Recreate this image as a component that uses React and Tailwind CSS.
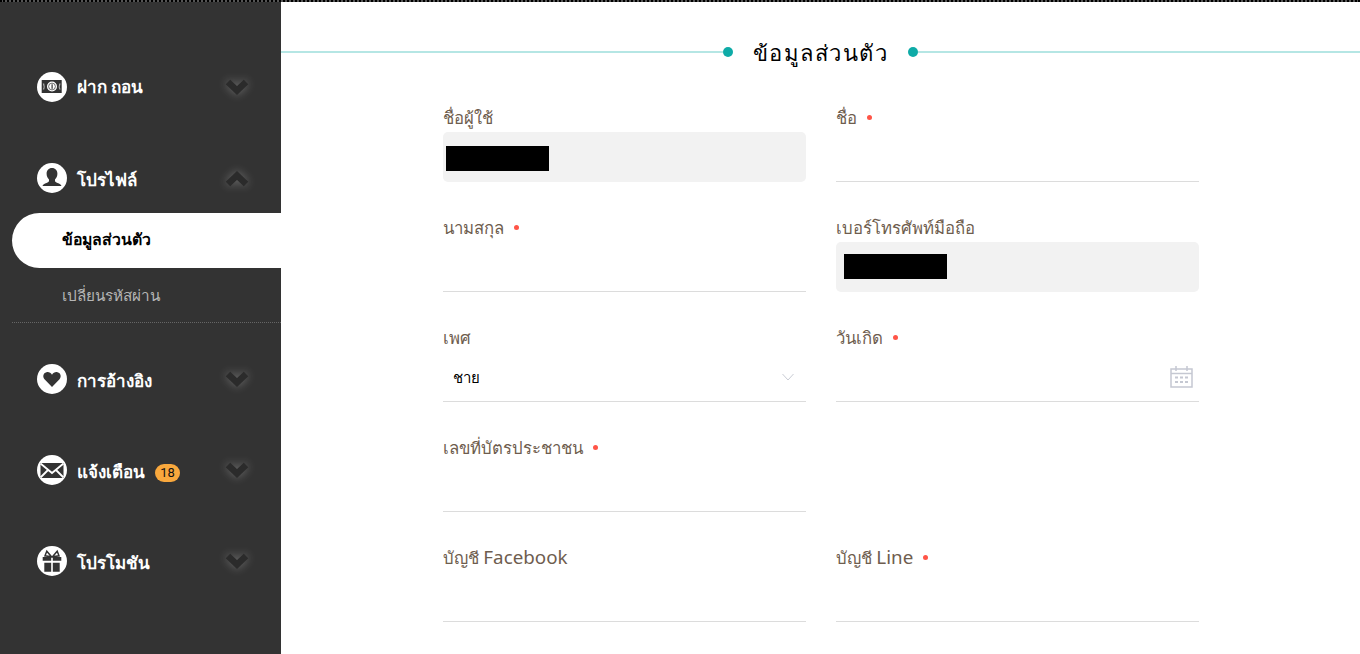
import React from 'react';

const MoneyIcon = () => (
  <svg viewBox="0 0 30 30" className="w-[30px] h-[30px]">
    <circle cx="15" cy="15" r="15" fill="#fff" />
    <rect x="4.700" y="8" width="20" height="13" fill="#333" />
    <circle cx="15" cy="14.500" r="5" fill="#fff" />
    <circle cx="15" cy="14.500" r="3.400" fill="none" stroke="#333" strokeWidth=".7" />
    <rect x="14.500" y="12.300" width="1.200" height="4.500" fill="#333" />
    <path d="M5.800 11.500q1.500 3 0 6h1.400q1-3 0-6zM23.600 11.500q-1.500 3 0 6h-1.400q-1-3 0-6z" fill="#aaa" />
  </svg>
);

const UserIcon = () => (
  <svg viewBox="0 0 30 30" className="w-[30px] h-[30px]">
    <circle cx="15" cy="15" r="15" fill="#fff" />
    <path d="M15 5c3.400 0 5.400 2.500 5.400 5.800 0 2.400-1 4.500-2.400 5.600v1.700c0 .8 1 1.200 2.500 1.800 2 .8 3.600 1.500 4 3.100H5.500c.4-1.600 2-2.300 4-3.100 1.500-.6 2.500-1 2.500-1.800v-1.700c-1.400-1.100-2.400-3.200-2.400-5.600C9.600 7.500 11.600 5 15 5z" fill="#333" />
  </svg>
);

const HeartIcon = () => (
  <svg viewBox="0 0 30 30" className="w-[30px] h-[30px]">
    <circle cx="15" cy="15" r="15" fill="#fff" />
    <path d="M15 23L7.500 15.200C5.500 13 6 9 9.500 8.200c2.300-.5 4.300.6 5.500 2.600 1.200-2 3.200-3.100 5.500-2.600C24 9 24.500 13 22.500 15.200z" fill="#333" />
  </svg>
);

const MailIcon = () => (
  <svg viewBox="0 0 30 30" className="w-[30px] h-[30px]">
    <circle cx="15" cy="15" r="15" fill="#fff" />
    <rect x="3.500" y="8" width="23" height="15" fill="#333" />
    <path d="M3.500 8.500L15 18 26.500 8.500M3.500 22.500l8-8M26.500 22.500l-8-8" stroke="#fff" strokeWidth="1.800" fill="none" />
  </svg>
);

const GiftIcon = () => (
  <svg viewBox="0 0 30 30" className="w-[30px] h-[30px]">
    <circle cx="15" cy="15" r="15" fill="#fff" />
    <path d="M7.300 16.800h6.900v8.900H7.300zM15.800 16.800h6.900v8.900h-6.900zM5.700 11h8.500v3.700H5.700zM15.800 11h8.500v3.700h-8.500z" fill="#333" />
    <path d="M14.500 10.700L8 9.800l1.800-4.600zM15.500 10.700L22 9.800l-1.800-4.600z" fill="none" stroke="#333" strokeWidth="1.500" />
  </svg>
);

const Chevron = ({ up }) => (
  <svg viewBox="0 0 24 18" className="w-6 h-[18px] drop-shadow-[0_0_5px_rgba(255,255,255,0.3)]">
    <path d={up ? 'M3 15L12 6.500 21 15' : 'M3 4l9 8.500L21 4'} fill="none" stroke="#2b2b2b" strokeWidth="6.500" />
  </svg>
);

const MenuItem = ({ icon, label, up, badge, drop = 'pt-[3px]' }) => (
  <div className="flex items-center h-[30px] pl-[37px] pr-[32px]">
    {icon}
    <span className={`ml-[10px] text-[17px] font-bold text-white ${drop}`}>{label}</span>
    {badge && (
      <span className="ml-[10px] mt-[6px] h-[18px] w-[25px] rounded-full bg-[#f9a83d] text-[#111] text-[13px] leading-[18px] text-center font-['Roboto',sans-serif]">{badge}</span>
    )}
    <span className="ml-auto"><Chevron up={up} /></span>
  </div>
);

const Label = ({ children, required }) => (
  <div className="h-[30px] leading-[30px] text-[16.750px] text-[#6e5d4e] flex items-center">
    <span className="pt-[2px]">{children}</span>
    {required && <span className="ml-[10px] w-[5px] h-[5px] rounded-full bg-[#ff5547]" />}
  </div>
);

const Field = ({ label, required, children }) => (
  <div>
    <Label required={required}>{label}</Label>
    {children || <div className="h-[50px] border-b border-[#dcdcdc]" />}
  </div>
);

const Masked = ({ pad }) => (
  <div className={`h-[50px] rounded-[5px] bg-[#f2f2f2] ${pad}`}>
    <div className="w-[103px] h-[25px] bg-black" />
  </div>
);

const CalendarIcon = () => (
  <svg viewBox="0 0 23 23" className="w-[23px] h-[23px]" fill="none" stroke="#c5c8d2">
    <path d="M1 4h21v18H1z" strokeWidth="1.500" />
    <path d="M1 8.500h21" strokeWidth="1.500" />
    <path d="M6 1v5M17 1v5" strokeWidth="1.500" />
    <path d="M5 12.500h3M10 12.500h3M15 12.500h3M5 17h3M10 17h3M15 17h3" strokeWidth="2" />
  </svg>
);

export default function App() {
  return (
    <div className="h-[654px] overflow-hidden bg-white font-['Noto_Sans','Liberation_Sans',sans-serif]">
      <div className="h-[2px] border-t-2 border-dotted border-black bg-[#555]" />
      <div className="flex h-[652px]">
        <aside className="w-[281px] shrink-0 bg-[#333] pt-[70px]">
          <MenuItem icon={<MoneyIcon />} label="ฝาก ถอน" drop="pt-0" />
          <div className="mt-[61px]">
            <MenuItem icon={<UserIcon />} label="โปรไฟล์" up />
          </div>
          <div className="mt-[20px] ml-[12px] border-b border-dotted border-[#666]">
            <div className="h-[55px] rounded-l-full bg-white flex items-center pl-[50px] pb-[2px] text-[15.800px] font-bold text-black">ข้อมูลส่วนตัว</div>
            <div className="h-[54px] flex items-center pl-[50px] text-[15.300px] text-[#b5b5b5]">เปลี่ยนรหัสผ่าน</div>
          </div>
          <div className="mt-[41px] flex flex-col gap-[61px]">
            <MenuItem icon={<HeartIcon />} label="การอ้างอิง" />
            <MenuItem icon={<MailIcon />} label="แจ้งเตือน" badge="18" />
            <MenuItem icon={<GiftIcon />} label="โปรโมชัน" />
          </div>
        </aside>
        <main className="flex-1">
          <div className="flex items-center mt-[35px] h-[30px]">
            <div className="flex-1 h-[2px] bg-[#b5e6e4]" />
            <span className="w-[10px] h-[10px] rounded-full bg-[#0eaba7]" />
            <h2 className="mx-[20px] text-[22px] tracking-[1.500px] text-black">ข้อมูลส่วนตัว</h2>
            <span className="w-[10px] h-[10px] rounded-full bg-[#0eaba7]" />
            <div className="flex-1 h-[2px] bg-[#b5e6e4]" />
          </div>
          <div className="ml-[162px] mt-[35px] w-[756px] grid grid-cols-2 gap-x-[30px] gap-y-[30px]">
            <Field label="ชื่อผู้ใช้"><Masked pad="pl-[3px] pt-[14px]" /></Field>
            <Field label="ชื่อ" required />
            <Field label="นามสกุล" required />
            <Field label="เบอร์โทรศัพท์มือถือ"><Masked pad="pl-[8px] pt-[12px]" /></Field>
            <Field label="เพศ">
              <div className="h-[50px] border-b border-[#dcdcdc] flex items-center justify-between pl-[10px] pr-[12px] text-[15px] text-black">
                <span className="pt-[2px]">ชาย</span>
                <svg viewBox="0 0 12 8" className="w-[12px] h-[8px]" fill="none" stroke="#c9ccd4"><path d="M.5 1L6 7l5.500-6" /></svg>
              </div>
            </Field>
            <Field label="วันเกิด" required>
              <div className="h-[50px] border-b border-[#dcdcdc] flex items-center justify-end pr-[6px]">
                <CalendarIcon />
              </div>
            </Field>
            <Field label="เลขที่บัตรประชาชน" required />
            <div />
            <Field label={<>บัญชี <span className="text-[18.800px] leading-[28px]">Facebook</span></>} />
            <Field label={<>บัญชี <span className="text-[18.800px] leading-[28px]">Line</span></>} required />
          </div>
        </main>
      </div>
    </div>
  );
}
